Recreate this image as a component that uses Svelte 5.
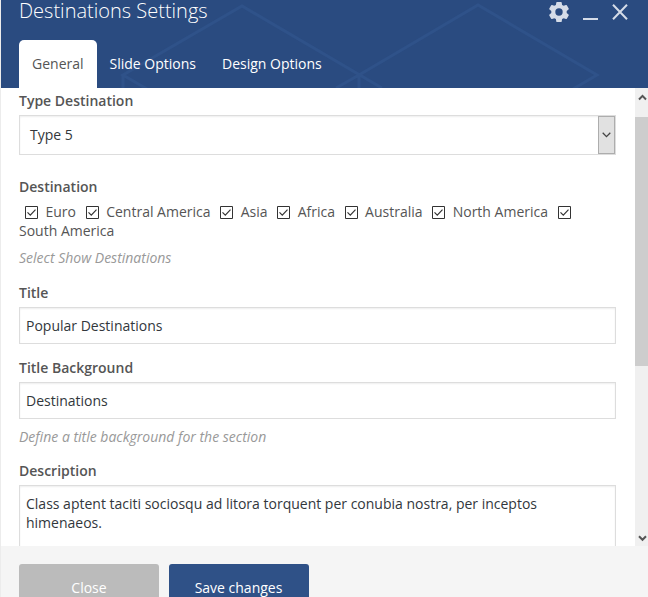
<script>
  const tabs = ['General', 'Slide Options', 'Design Options'];
  const destinations = ['Euro', 'Central America', 'Asia', 'Africa', 'Australia', 'North America', 'South America'];
</script>

<div class="window">
  <div class="panel">
    <header>
      <svg class="pattern" width="647" height="88" viewBox="1 0 647 88" fill="none" stroke="#2f5289" stroke-width="3">
        <path d="M147 89L123 75L242 6L382 88M123 75V88M336 88L359 75L478 5L597 75L573 89M359 75V88" />
      </svg>
      <div class="heading">
        <h1>Destinations Settings</h1>
        <div class="controls">
          <svg width="20" height="20" viewBox="0 0 20 20" fill="#d5dce8">
            <path fill-rule="evenodd" d="M8 0h4q.6 0 .7.6l.4 2.3 1.6.9 2.2-.8q.6-.2.9.3l1.9 3.3q.3.5-.2.9l-1.8 1.6v1.8l1.8 1.6q.5.4.2.9l-1.9 3.3q-.3.5-.9.3l-2.2-.8-1.6.9-.4 2.3q-.1.6-.7.6H8q-.6 0-.7-.6l-.4-2.3-1.6-.9-2.2.8q-.6.2-.9-.3L.3 13.400q-.3-.5.2-.9l1.8-1.600V9.100L.5 7.500Q0 7.100.3 6.600l1.900-3.300q.3-.5.9-.3l2.200.8 1.600-.9.400-2.300Q7.400 0 8 0zM10 6.300a3.700 3.700 0 1 0 0 7.400 3.700 3.700 0 0 0 0-7.400z" />
          </svg>
          <svg width="15" height="20" viewBox="0 0 15 20"><path d="M0 17h15" stroke="#d5dce8" stroke-width="2" /></svg>
          <svg width="16" height="20" viewBox="0 0 16 20"><path d="M1 2.700l14 14.600M15 2.700L1 17.300" stroke="#d5dce8" stroke-width="2" /></svg>
        </div>
      </div>
      <nav>
        {#each tabs as tab, i}
          <button class="tab" class:active={i === 0}>{tab}</button>
        {/each}
      </nav>
    </header>

    <main>
      <div class="form">
        <section class="type">
          <h2>Type Destination</h2>
          <div class="box select">
            <span>Type 5</span>
            <span class="arrow">
              <svg width="9" height="6" viewBox="0 0 9 6"><path d="M.7 .8l3.800 3.800L8.300 .8" fill="none" stroke="#444" stroke-width="1.300" /></svg>
            </span>
          </div>
        </section>

        <section class="places">
          <h2>Destination</h2>
          <div class="checks">
            {#each destinations as name}
              <svg class="check" width="13" height="13" viewBox="0 0 13 13" fill="none"><path d="M.5 .5h12v12H.5z" stroke="#333" /><path d="M2.500 6.300l2.800 2.900 5.200-5.500" stroke="#333" stroke-width="1.200" /></svg><span class="name">{name}</span>{' '}
            {/each}
          </div>
          <p>Select Show Destinations</p>
        </section>

        <section class="title">
          <h2>Title</h2>
          <div class="box field">Popular Destinations</div>
        </section>

        <section class="background">
          <h2>Title Background</h2>
          <div class="box field">Destinations</div>
          <p>Define a title background for the section</p>
        </section>

        <section>
          <h2>Description</h2>
          <div class="box area">Class aptent taciti sociosqu ad litora torquent per conubia nostra, per inceptos himenaeos.</div>
        </section>
      </div>
      <div class="scrollbar">
        <svg width="13" height="29" viewBox="0 0 13 29"><path d="M4 11.500l3.500-3.600 3.500 3.600" fill="none" stroke="#555" stroke-width="2" /></svg>
        <div class="thumb"></div>
        <svg width="13" height="17" viewBox="0 0 13 17"><path d="M4 7.200l3.500 3.600L11 7.200" fill="none" stroke="#555" stroke-width="2" /></svg>
      </div>
    </main>

    <footer>
      <button>Close</button>
      <button class="save">Save changes</button>
    </footer>
  </div>
</div>

<style>
  .window { height: 597px; width: 648px; overflow: hidden; background: #ececec; padding-left: 1px; box-sizing: border-box; font: 14px/19px "Open Sans", sans-serif; color: #555; }
  .window * { box-sizing: border-box; }
  .panel { height: 597px; display: flex; flex-direction: column; background: #fff; }
  header { height: 88px; background: #2a4b80; position: relative; display: flex; flex-direction: column; justify-content: space-between; flex: none; }
  .pattern { position: absolute; inset: 0; }
  .heading { position: relative; display: flex; justify-content: space-between; padding: 0 20px 0 18px; height: 24px; }
  h1 { margin: 0; font-size: 20px; line-height: 22px; font-weight: 300; color: #fff; }
  .controls { display: flex; padding-top: 2px; gap: 14px; }
  nav { position: relative; display: flex; padding-left: 18px; }
  button { font: inherit; border: 0; color: #fff; }
  .tab { height: 48px; padding: 0 13px 2px; background: none; }
  .tab.active { background: #fff; color: #555; border-radius: 5px 5px 0 0; }
  main { height: 458px; display: flex; overflow: hidden; flex: none; }
  .form { flex: 1; padding: 3px 19px 0 18px; }
  h2 { font-size: 14px; line-height: 19px; font-weight: 600; margin: 0 0 5px; }
  p { margin: 8px 0 0; font-style: italic; color: #999; }
  .box { border: 1px solid #ddd; background: #fff; color: #32373c; box-shadow: inset 0 1px 2px rgba(0, 0, 0, .07); }
  .select { height: 40px; display: flex; align-items: center; justify-content: space-between; padding-left: 10px; }
  .select > span:first-child { padding-bottom: 2px; }
  .arrow { width: 17px; height: 38px; background: #e1e1e1; border: 1px solid #adadad; display: flex; align-items: center; justify-content: center; padding-right: 1px; }
  .type { height: 86px; }
  .places { height: 106px; }
  .places h2 { margin-bottom: 6px; }
  .check { margin: 0 7.5px 0 6px; vertical-align: -2px; }
  .name { white-space: nowrap; }
  .title { height: 75px; }
  .field { height: 37px; padding: 8px 6px; }
  .background { height: 103px; }
  .area { height: 100px; padding: 8px 6px; }
  .scrollbar { width: 13px; background: #f0f0f0; display: flex; flex-direction: column; }
  .scrollbar svg { flex: none; display: block; }
  .thumb { height: 249px; margin-bottom: 163px; background: #cdcdcd; flex: none; }
  footer { flex: 1; background: #f5f5f5; padding: 18px 18px 0; display: flex; gap: 10px; }
  footer button { width: 140px; height: 47px; background: #bbb; border-radius: 3px; flex: none; }
  footer .save { background: #2f5187; padding-right: 7px; }
</style>
